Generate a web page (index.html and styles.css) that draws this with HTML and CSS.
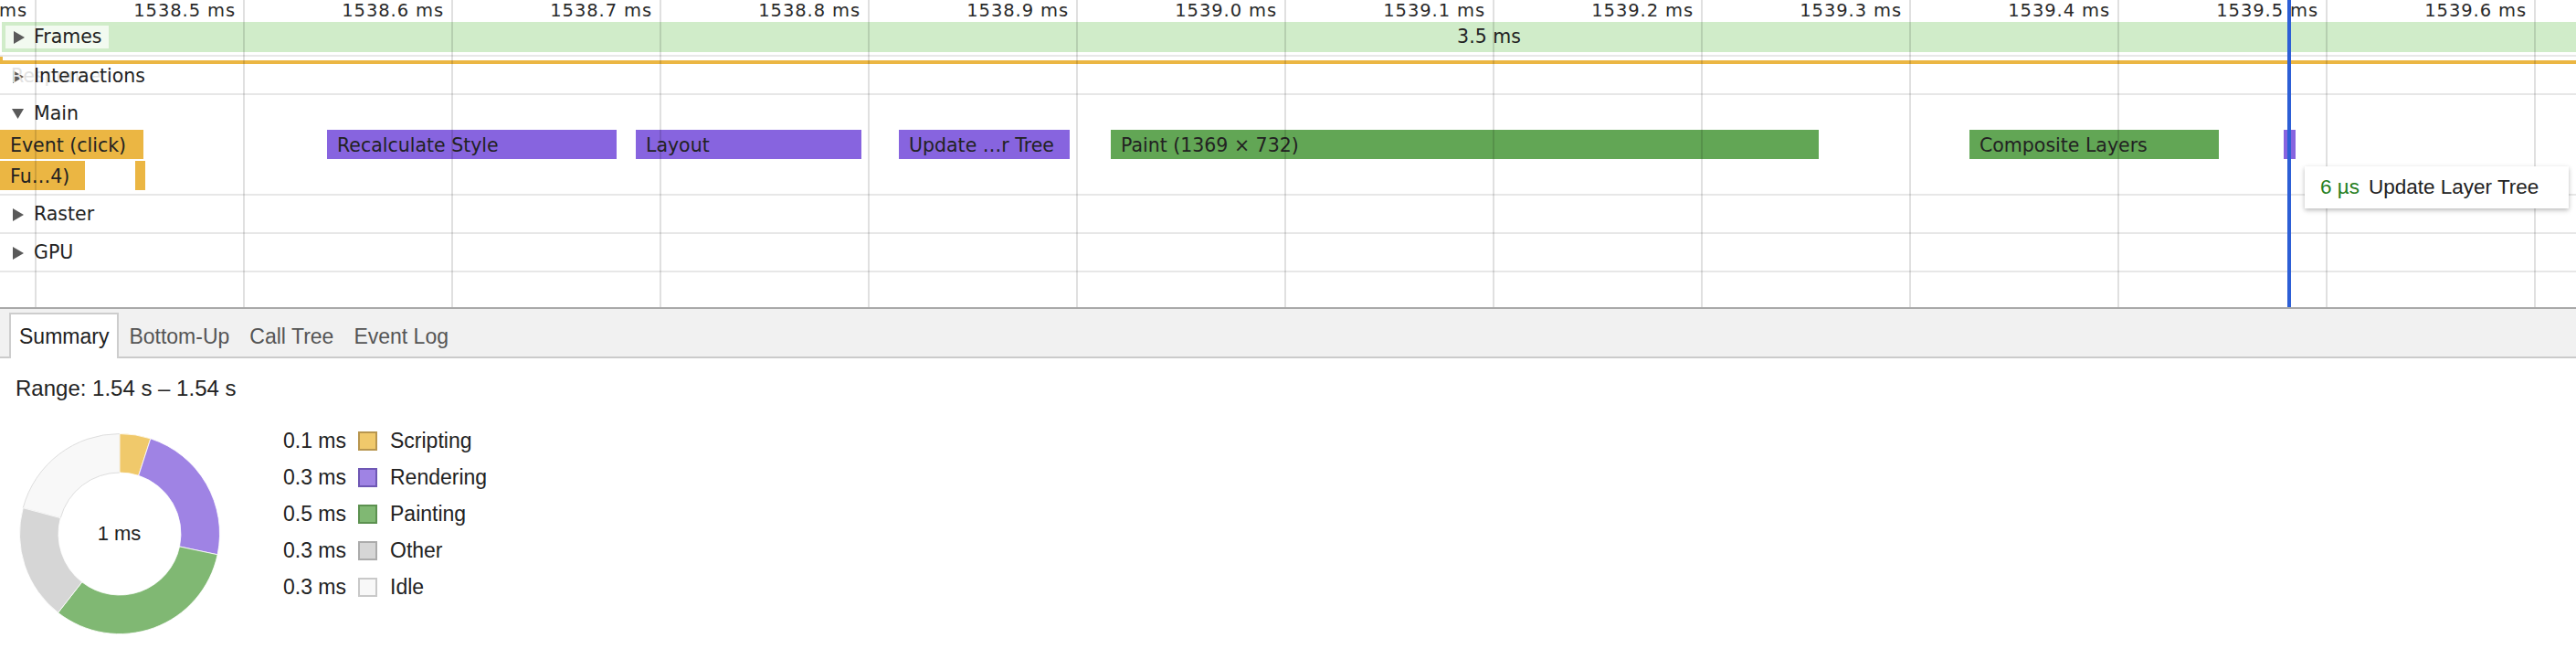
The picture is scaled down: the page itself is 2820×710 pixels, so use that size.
FILE: index.html
```html
<!DOCTYPE html>
<html>
<head>
<meta charset="utf-8">
<title>Performance</title>
<link rel="stylesheet" href="styles.css">
</head>
<body>
<div class="timeline">
  <div class="ruler">
    <span class="tick" style="left:30px">1538.4 ms</span>
    <span class="tick" style="left:258px">1538.5 ms</span>
    <span class="tick" style="left:486px">1538.6 ms</span>
    <span class="tick" style="left:714px">1538.7 ms</span>
    <span class="tick" style="left:942px">1538.8 ms</span>
    <span class="tick" style="left:1170px">1538.9 ms</span>
    <span class="tick" style="left:1398px">1539.0 ms</span>
    <span class="tick" style="left:1626px">1539.1 ms</span>
    <span class="tick" style="left:1854px">1539.2 ms</span>
    <span class="tick" style="left:2082px">1539.3 ms</span>
    <span class="tick" style="left:2310px">1539.4 ms</span>
    <span class="tick" style="left:2538px">1539.5 ms</span>
    <span class="tick" style="left:2766px">1539.6 ms</span>
  </div>

  <div class="frames">
    <div class="frames-label">
      <svg class="tri" width="12" height="14" viewBox="0 0 12 14"><path d="M0 0L12 7L0 14Z"/></svg>
      <span>Frames</span>
    </div>
    <span class="frame-dur" style="left:1628px">3.5 ms</span>
  </div>
  <div class="frames-rule"></div>
  <div class="frames-gap"></div>
  <div class="interaction-line"></div>

  <div class="track track-first">
    <span class="ghost">Response</span>
    <svg class="tri" width="12" height="14" viewBox="0 0 12 14"><path d="M0 0L12 7L0 14Z"/></svg>
    <span class="track-name">Interactions</span>
  </div>

  <div class="group-head">
    <svg class="tri-down" width="13" height="11" viewBox="0 0 13 11"><path d="M0 0H13L6.5 11Z"/></svg>
    <span>Main</span>
  </div>

  <div class="flame">
    <div class="bar scripting" style="left:0px;width:157px;top:0px">Event (click)</div>
    <div class="bar scripting" style="left:0px;width:93px;top:34px">Fu…4)</div>
    <div class="bar scripting" style="left:148px;width:5px;top:34px"></div>
    <div class="bar rendering" style="left:358px;width:317px;top:0px">Recalculate Style</div>
    <div class="bar rendering" style="left:696px;width:247px;top:0px">Layout</div>
    <div class="bar rendering" style="left:984px;width:187px;top:0px">Update …r Tree</div>
    <div class="bar painting" style="left:1216px;width:775px;top:0px">Paint (1369 × 732)</div>
    <div class="bar painting" style="left:2156px;width:273px;top:0px">Composite Layers</div>
    <div class="bar rendering" style="left:2500px;width:13px;top:0px"></div>
  </div>

  <div class="track">
    <svg class="tri" width="12" height="14" viewBox="0 0 12 14"><path d="M0 0L12 7L0 14Z"/></svg>
    <span class="track-name">Raster</span>
  </div>
  <div class="track">
    <svg class="tri" width="12" height="14" viewBox="0 0 12 14"><path d="M0 0L12 7L0 14Z"/></svg>
    <span class="track-name">GPU</span>
  </div>

  <div class="grid">
    <div class="gl" style="left:38px"></div>
    <div class="gl" style="left:266px"></div>
    <div class="gl" style="left:494px"></div>
    <div class="gl" style="left:722px"></div>
    <div class="gl" style="left:950px"></div>
    <div class="gl" style="left:1178px"></div>
    <div class="gl" style="left:1406px"></div>
    <div class="gl" style="left:1634px"></div>
    <div class="gl" style="left:1862px"></div>
    <div class="gl" style="left:2090px"></div>
    <div class="gl" style="left:2318px"></div>
    <div class="gl" style="left:2546px"></div>
    <div class="gl" style="left:2774px"></div>
  </div>

  <div class="cursor"></div>

  <div class="tooltip">
    <span class="tip-dur">6 µs</span>
    <span>Update Layer Tree</span>
  </div>
</div>

<div class="details">
  <div class="tabs">
    <div class="tab active">Summary</div>
    <div class="tab">Bottom-Up</div>
    <div class="tab">Call Tree</div>
    <div class="tab">Event Log</div>
  </div>
  <div class="summary">
    <div class="range">Range: 1.54 s – 1.54 s</div>
    <div class="chart">
      <div class="donut">
        <svg width="220" height="220" viewBox="0 0 220 220">
          <path class="seg-idle" d="M4.23 81.66A109.5 109.5 0 0 1 110 0.5L110 43A67 67 0 0 0 45.28 92.66Z"/>
          <path class="seg-script" d="M110 0.5A109.5 109.5 0 0 1 143.84 5.85L130.70 46.28A67 67 0 0 0 110 43Z"/>
          <path class="seg-render" d="M143.84 5.85A109.5 109.5 0 0 1 217.11 132.77L175.53 123.93A67 67 0 0 0 130.70 46.28Z"/>
          <path class="seg-paint" d="M217.11 132.77A109.5 109.5 0 0 1 42.58 196.29L68.75 162.80A67 67 0 0 0 175.53 123.93Z"/>
          <path class="seg-other" d="M42.58 196.29A109.5 109.5 0 0 1 4.23 81.66L45.28 92.66A67 67 0 0 0 68.75 162.80Z"/>
        </svg>
        <div class="donut-total">1 ms</div>
      </div>
      <div class="legend">
        <span class="val">0.1 ms</span><span class="sw sw-script"></span><span class="name">Scripting</span>
        <span class="val">0.3 ms</span><span class="sw sw-render"></span><span class="name">Rendering</span>
        <span class="val">0.5 ms</span><span class="sw sw-paint"></span><span class="name">Painting</span>
        <span class="val">0.3 ms</span><span class="sw sw-other"></span><span class="name">Other</span>
        <span class="val">0.3 ms</span><span class="sw sw-idle"></span><span class="name">Idle</span>
      </div>
    </div>
  </div>
</div>
</body>
</html>
```

FILE: styles.css
```css
html, body {
  margin: 0;
  padding: 0;
  background: #fff;
}

body {
  width: 2820px;
  height: 710px;
  overflow: hidden;
}

/* ---------- timeline ---------- */
.timeline {
  position: relative;
  height: 336px;
  overflow: hidden;
  font-family: "DejaVu Sans", sans-serif;
  font-size: 20.5px;
  color: #222;
}

.ruler {
  position: relative;
  height: 24px;
}

.tick {
  position: absolute;
  top: 0;
  line-height: 23px;
  font-size: 19.5px;
  letter-spacing: 0.9px;
  color: #2a2a2a;
  white-space: nowrap;
  transform: translateX(-100%);
}

.frames {
  position: relative;
  margin-left: 2px;
  height: 33px;
  padding-top: 4px;
  box-sizing: border-box;
  background: #d0ecc9;
}

.frames-label {
  display: flex;
  align-items: center;
  margin-left: 4px;
  width: 113px;
  height: 25px;
  padding-left: 9px;
  box-sizing: border-box;
  background: rgba(255, 255, 255, 0.72);
  line-height: 25px;
}

.frames-label .tri {
  margin-right: 10px;
}

.frame-dur {
  position: absolute;
  top: 4px;
  line-height: 25px;
  transform: translateX(-50%);
  white-space: nowrap;
}

.frames-rule {
  margin-top: 3px;
  height: 2px;
  background: #e8e8e8;
}

.frames-gap {
  height: 4px;
  width: 0;
  border-left: 3px solid #ebb643;
}

.interaction-line {
  height: 4px;
  background: #ebb643;
}

.tri {
  flex: none;
  fill: #5a5a5a;
  margin-right: 11px;
}

.tri-down {
  flex: none;
  fill: #5a5a5a;
  margin-right: 11px;
}

.track {
  position: relative;
  display: flex;
  align-items: center;
  height: 27px;
  line-height: 27px;
  padding: 7px 0 6px 14px;
  border-bottom: 2px solid #e7e7e7;
}

.track-first {
  padding-top: 0;
  padding-bottom: 5px;
}

.track-name {
  position: relative;
}

.ghost {
  position: absolute;
  left: 12px;
  top: 0;
  color: #e2e2e2;
  white-space: nowrap;
}

.group-head {
  display: flex;
  align-items: center;
  height: 27px;
  line-height: 27px;
  padding: 7px 0 4px 13px;
}

.flame {
  position: relative;
  height: 68px;
  padding-bottom: 2px;
  border-bottom: 2px solid #e7e7e7;
}

.bar {
  position: absolute;
  height: 32px;
  line-height: 34px;
  padding-left: 11px;
  box-sizing: border-box;
  white-space: nowrap;
  overflow: hidden;
  color: #222;
}

.scripting { background: #ebb643; }
.rendering { background: #8764df; }
.painting { background: #62a655; }

.grid {
  position: absolute;
  top: 0;
  left: 0;
  right: 0;
  bottom: 0;
  pointer-events: none;
}

.gl {
  position: absolute;
  top: 0;
  bottom: 0;
  width: 2px;
  background: rgba(0, 0, 0, 0.12);
}

.cursor {
  position: absolute;
  left: 2504px;
  top: 0;
  bottom: 0;
  width: 4px;
  background: #2d5fd6;
}

.tooltip {
  position: absolute;
  left: 2523px;
  top: 182px;
  width: 289px;
  height: 46px;
  box-sizing: border-box;
  padding-left: 17px;
  display: flex;
  align-items: center;
  gap: 10px;
  background: #fff;
  box-shadow: 0 2px 5px rgba(0, 0, 0, 0.28);
  font-family: "Liberation Sans", Arial, sans-serif;
  font-size: 22.5px;
  color: #222;
  white-space: nowrap;
}

.tip-dur {
  color: #27801f;
}

/* ---------- details panel ---------- */
.details {
  font-family: "Liberation Sans", Arial, sans-serif;
  color: #222;
}

.tabs {
  display: flex;
  align-items: flex-end;
  height: 52px;
  padding-left: 10px;
  background: #f1f1f1;
  border-top: 2px solid #a9a9a9;
  border-bottom: 2px solid #cbcbcb;
  font-size: 23px;
}

.tab {
  display: flex;
  align-items: center;
  height: 48px;
  padding: 4px 11px 0;
  box-sizing: border-box;
  color: #555;
  white-space: nowrap;
}

.tab.active {
  height: 50px;
  margin-bottom: -2px;
  padding: 0 9px;
  background: #fff;
  border: 2px solid #cdcdcd;
  border-bottom: none;
  color: #222;
}

.summary {
  padding-left: 17px;
}

.range {
  margin-top: 18px;
  font-size: 24px;
  line-height: 30px;
}

.chart {
  display: flex;
  align-items: flex-start;
  margin-top: 22px;
}

.donut {
  position: relative;
  width: 220px;
  height: 220px;
  margin-top: 12px;
  margin-left: 3.5px;
  flex: none;
}

.donut svg {
  display: block;
}

.donut path {
  stroke: #fff;
  stroke-width: 0.8;
}

.seg-script { fill: #f0c96b; }
.seg-render { fill: #9f83e4; }
.seg-paint { fill: #80b873; }
.seg-other { fill: #d6d6d6; }
.donut path.seg-idle { fill: #f8f8f8; stroke: #dedede; stroke-width: 1; }

.donut-total {
  position: absolute;
  left: 0;
  right: 0;
  top: 0;
  bottom: 0;
  display: flex;
  align-items: center;
  justify-content: center;
  font-size: 22px;
}

.legend {
  display: grid;
  grid-template-columns: 100px 21px auto;
  grid-auto-rows: 40px;
  align-items: center;
  margin-left: 38.5px;
  font-size: 23px;
}

.val {
  text-align: right;
  white-space: nowrap;
}

.sw {
  width: 21px;
  height: 21px;
  box-sizing: border-box;
  border: 2px solid;
  margin-left: 13px;
}

.name {
  margin-left: 27px;
  white-space: nowrap;
}

.sw-script { background: #f0c96b; border-color: #b8964e; }
.sw-render { background: #9f83e4; border-color: #6e57b4; }
.sw-paint { background: #80b873; border-color: #5c9150; }
.sw-other { background: #d6d6d6; border-color: #ababab; }
.sw-idle { background: #f8f8f8; border-color: #c9c9c9; }
```
